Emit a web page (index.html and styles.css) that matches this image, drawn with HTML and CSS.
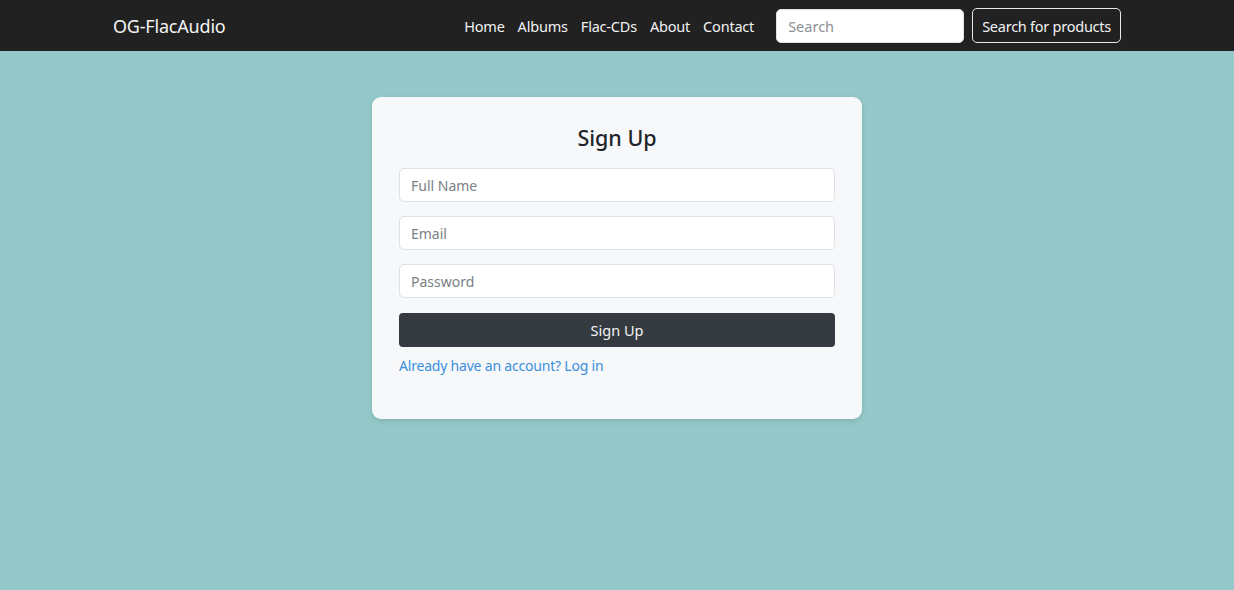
FILE: index.html
```html
<!DOCTYPE html>
<html lang="en">
<head>
<meta charset="utf-8">
<title>OG-FlacAudio - Sign Up</title>
<link rel="stylesheet" href="styles.css">
</head>
<body>
<header class="navbar">
  <a class="brand" href="#">OG-FlacAudio</a>
  <div class="nav-right">
    <nav class="nav-links">
      <a href="#">Home</a>
      <a href="#">Albums</a>
      <a href="#">Flac-CDs</a>
      <a href="#">About</a>
      <a href="#">Contact</a>
    </nav>
    <form class="search">
      <input class="search-input" type="text" placeholder="Search">
      <button class="search-btn" type="button">Search for products</button>
    </form>
  </div>
</header>
<main class="main">
  <section class="card">
    <h2 class="card-title">Sign Up</h2>
    <form class="form">
      <input class="field" type="text" placeholder="Full Name">
      <input class="field" type="email" placeholder="Email">
      <input class="field" type="password" placeholder="Password">
      <button class="submit" type="button">Sign Up</button>
    </form>
    <a class="login-link" href="#">Already have an account? Log in</a>
  </section>
</main>
</body>
</html>
```

FILE: styles.css
```css
* { box-sizing: border-box; }
html, body { height: 100%; }
body {
  margin: 0;
  background: #95c9c9;
  font-family: "Noto Sans", "Open Sans", sans-serif;
  color: #212529;
}
.navbar {
  height: 51px;
  background: #212121;
  display: flex;
  align-items: center;
  justify-content: space-between;
  padding: 0 113px;
}
.brand {
  color: #f4f4f4;
  text-decoration: none;
  font-size: 18px;
  letter-spacing: -0.2px;
}
.nav-right {
  display: flex;
  align-items: center;
}
.nav-links {
  display: flex;
  gap: 13px;
  margin-right: 22px;
}
.nav-links a {
  color: #f2f2f2;
  text-decoration: none;
  font-size: 14.5px;
  letter-spacing: -0.2px;
}
.search {
  display: flex;
  align-items: center;
  gap: 8px;
  margin: 0;
}
.search-input {
  width: 188px;
  height: 34px;
  border: 1px solid #dee2e6;
  border-radius: 5px;
  padding: 0 11px;
  font-family: inherit;
  font-size: 14.5px;
  background: #fff;
}
.search-input::placeholder { color: #8a8f94; }
.search-btn {
  height: 35px;
  padding: 0 9px;
  background: transparent;
  border: 1px solid #e8e8e8;
  border-radius: 5px;
  color: #f2f2f2;
  font-family: inherit;
  font-size: 14.5px;
  letter-spacing: -0.25px;
}
.main {
  display: flex;
  justify-content: center;
  padding-top: 46px;
}
.card {
  width: 490px;
  background: #f7f8fa;
  border-radius: 9px;
  padding: 23px 27px 43px;
  box-shadow: 0 2px 6px rgba(0,0,0,0.12);
}
.card-title {
  margin: 0 0 12px;
  text-align: center;
  font-size: 21.5px;
  font-weight: 500;
  line-height: 36px;
  color: #212529;
}
.form {
  display: flex;
  flex-direction: column;
  gap: 14px;
  margin: 0;
}
.field {
  height: 34px;
  border: 1px solid #dee2e6;
  border-radius: 5px;
  background: #fff;
  padding: 0 11px;
  font-family: inherit;
  font-size: 14px;
}
.field::placeholder { color: #7a7f84; }
.submit {
  margin-top: 1px;
  height: 34px;
  border: none;
  border-radius: 4px;
  background: #343a40;
  color: #f2f2f2;
  font-family: inherit;
  font-size: 14.5px;
}
.login-link {
  display: block;
  margin-top: 9px;
  color: #3a8fdd;
  text-decoration: none;
  font-size: 14px;
  letter-spacing: -0.2px;
  line-height: 20px;
}
```
